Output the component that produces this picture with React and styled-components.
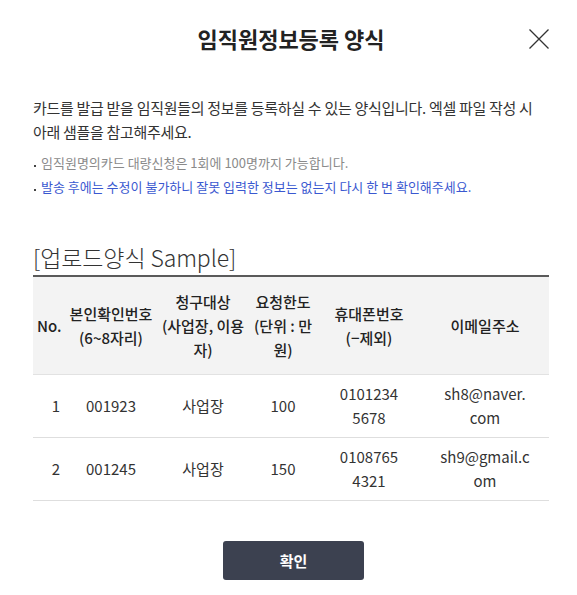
import React from 'react'
import styled, { createGlobalStyle } from 'styled-components'

const GlobalStyle = createGlobalStyle`
  body {
    margin: 0;
    background: #fff;
    font-family: 'Noto Sans CJK KR', 'Noto Sans', sans-serif;
    color: #333;
  }
`

const Modal = styled.div`
  width: 577px;
  padding: 0 28px 0 33px;
  box-sizing: border-box;
`

const Header = styled.div`
  position: relative;
  height: 56px;
  padding-top: 20px;
  box-sizing: border-box;
  text-align: center;
`

const Title = styled.h2`
  margin: 0;
  font-size: 22px;
  line-height: 36px;
  font-weight: 700;
  color: #222;
`

const CloseButton = styled.button`
  position: absolute;
  right: -1px;
  top: 28px;
  width: 22px;
  height: 22px;
  padding: 0;
  border: 0;
  background: none;
  cursor: pointer;
`

const Desc = styled.p`
  margin: 40px 0 0;
  font-size: 15px;
  line-height: 24px;
  letter-spacing: -0.3px;
  color: #333;
`

const Notes = styled.ul`
  margin: 7px 0 0;
  padding: 0;
  list-style: none;
`

const Note = styled.li`
  position: relative;
  padding-left: 8px;
  font-size: 13px;
  line-height: 24px;
  color: ${p => (p.$blue ? '#3a58d0' : '#8a8a8a')};

  &::before {
    content: '';
    position: absolute;
    left: 1px;
    top: 14px;
    width: 2px;
    height: 2px;
    background: #444;
  }
`

const SectionTitle = styled.h3`
  margin: 43px 0 0;
  font-size: 23px;
  line-height: 30px;
  font-weight: 300;
  letter-spacing: -0.1px;
  color: #333;
`

const Table = styled.div`
  margin-top: 3px;
  border-top: 2px solid #5a5a5a;
`

const COLUMNS = '46px 64px 120px 40px 132px 100px 1fr'

const HeadRow = styled.div`
  display: grid;
  grid-template-columns: ${COLUMNS};
  align-items: center;
  height: 97px;
  background: #f3f3f3;
  border-bottom: 1px solid #e2e2e2;
`

const Row = styled.div`
  display: grid;
  grid-template-columns: ${COLUMNS};
  align-items: center;
  height: 62px;
  border-bottom: 1px solid #dedede;
`

const Cell = styled.div`
  display: flex;
  flex-direction: column;
  align-items: ${p => (p.$start ? 'flex-start' : 'center')};
  padding-left: ${p => (p.$start ? '4px' : '0')};
  font-size: 15px;
  line-height: 24px;
  white-space: nowrap;
  color: #333;
`

const HeadCell = styled(Cell)`
  font-weight: 500;
  color: #222;
`

const Footer = styled.div`
  display: flex;
  justify-content: center;
  margin-top: 40px;
`

const ConfirmButton = styled.button`
  width: 141px;
  height: 39px;
  margin-left: 5px;
  border: 0;
  border-radius: 3px;
  background: #3c4150;
  color: #fff;
  font-family: inherit;
  font-size: 15px;
  font-weight: 700;
  cursor: pointer;
`

const headers = [
  ['No.'],
  ['본인확인번호', '(6~8자리)'],
  ['청구대상', '(사업장, 이용', '자)'],
  ['요청한도', '(단위 : 만', '원)'],
  ['휴대폰번호', '(−제외)'],
  ['이메일주소'],
]

const rows = [
  [['1'], ['001923'], ['사업장'], ['100'], ['0101234', '5678'], ['sh8@naver.', 'com']],
  [['2'], ['001245'], ['사업장'], ['150'], ['0108765', '4321'], ['sh9@gmail.c', 'om']],
]

const Lines = ({ lines }) => lines.map((l, i) => <span key={i}>{l}</span>)

const App = () => {
  return (
    <Modal>
      <GlobalStyle />
      <Header>
        <Title>임직원정보등록 양식</Title>
        <CloseButton aria-label="닫기">
          <svg width="22" height="22" viewBox="0 0 22 22">
            <path d="M1.5 1.5 L20.5 20.5 M20.5 1.5 L1.5 20.5" stroke="#333" strokeWidth="1.3" fill="none" />
          </svg>
        </CloseButton>
      </Header>

      <Desc>
        카드를 발급 받을 임직원들의 정보를 등록하실 수 있는 양식입니다. 엑셀 파일 작성 시
        아래 샘플을 참고해주세요.
      </Desc>
      <Notes>
        <Note>임직원명의카드 대량신청은 1회에 100명까지 가능합니다.</Note>
        <Note $blue>발송 후에는 수정이 불가하니 잘못 입력한 정보는 없는지 다시 한 번 확인해주세요.</Note>
      </Notes>

      <SectionTitle>[업로드양식 Sample]</SectionTitle>
      <Table>
        <HeadRow>
          {headers.map((h, i) => (
            <HeadCell key={i} $start={i === 0}>
              <Lines lines={h} />
            </HeadCell>
          ))}
        </HeadRow>
        {rows.map((r, ri) => (
          <Row key={ri}>
            {r.map((c, ci) => (
              <Cell key={ci}>
                <Lines lines={c} />
              </Cell>
            ))}
          </Row>
        ))}
      </Table>

      <Footer>
        <ConfirmButton>확인</ConfirmButton>
      </Footer>
    </Modal>
  )
}

export default App
